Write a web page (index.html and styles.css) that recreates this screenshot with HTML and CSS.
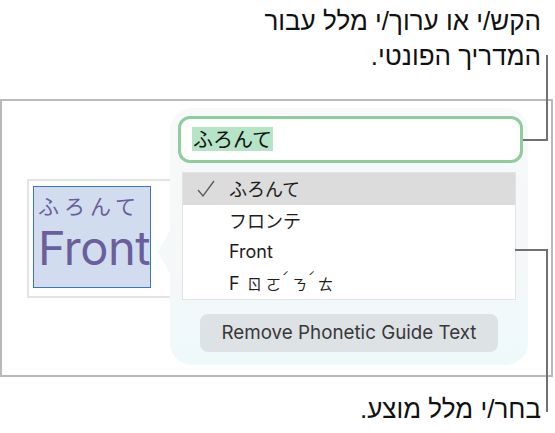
FILE: index.html
```html
<!DOCTYPE html>
<html lang="he">
<head>
<meta charset="utf-8">
<link rel="stylesheet" href="styles.css">
</head>
<body>
<div class="page">
  <div class="caption caption-top" dir="rtl">
    <div>הקש/י או ערוך/י מלל עבור</div>
    <div>המדריך הפונטי.</div>
  </div>

  <div class="frame">
    <div class="textbox">
      <div class="sel">
        <div class="ruby">ふろんて</div>
        <div class="base">Front</div>
      </div>
    </div>

    <div class="popover">
      <div class="arrow"></div>
      <div class="field"><span class="hl">ふろんて</span></div>
      <ul class="list">
        <li class="row active"><svg class="check" width="18" height="18" viewBox="0 0 18 18"><polyline points="1,10 6,16 17,1" fill="none" stroke="#5a5a5a" stroke-width="1.3"/></svg><span class="jp">ふろんて</span></li>
        <li class="row"><span class="jp">フロンテ</span></li>
        <li class="row"><span>Front</span></li>
        <li class="row bopo"><span class="g f">F</span><span class="g zy">ㄖ</span><span class="g zy">ㄛ</span><span class="g tone">ˊ</span><span class="g zy">ㄋ</span><span class="g tone">ˊ</span><span class="g zy">ㄊ</span></li>
      </ul>
      <div class="btn-wrap"><div class="btn">Remove Phonetic Guide Text</div></div>
    </div>
  </div>

  <div class="caption caption-bottom" dir="rtl">בחר/י מלל מוצע.</div>

  <div class="callout callout-top-v"></div>
  <div class="callout callout-top-h"></div>
  <div class="callout callout-bot-h"></div>
  <div class="callout callout-bot-v"></div>
</div>
</body>
</html>
```

FILE: styles.css
```css
* { box-sizing: border-box; }
html, body { margin: 0; padding: 0; background: #fff; }
.page {
  position: relative;
  width: 555px;
  height: 433px;
  overflow: hidden;
  font-family: "Liberation Sans", Arial, sans-serif;
  color: #111;
}
.caption {
  font-size: 26px;
  line-height: 35px;
  text-align: right;
  padding-right: 14px;
}
.caption-top {
  height: 99px;
  padding-top: 4px;
}
.caption-bottom {
  padding-top: 15px;
}
.frame {
  position: relative;
  width: 553px;
  height: 278px;
  border: 2px solid #b9b9b9;
  padding: 78px 0 0 25px;
}
.textbox {
  width: 160px;
  height: 119px;
  border: 2px solid #e4e4e4;
  padding: 5px 0 0 4px;
}
.sel {
  width: 118px;
  height: 102px;
  background: #d1ddee;
  border: 1.5px solid #3c74c3;
  color: #6a5e9c;
  overflow: hidden;
  padding-left: 4px;
}
.ruby {
  font-family: "Noto Sans CJK JP", sans-serif;
  font-size: 21px;
  line-height: 26px;
  letter-spacing: 5px;
  margin-top: 5px;
  white-space: nowrap;
}
.base {
  font-family: "Inter", "Liberation Sans", sans-serif;
  font-size: 47px;
  line-height: 56px;
  white-space: nowrap;
  margin-top: 2px;
  letter-spacing: -0.5px;
}
.popover {
  position: absolute;
  left: 168px;
  top: 7px;
  width: 358px;
  height: 257px;
  border-radius: 22px;
  background: linear-gradient(180deg, #f7f9fa 0%, #f4f8f9 60%, #eef9fc 100%);
  padding: 8px 5px 0 8px;
}
.arrow {
  position: absolute;
  left: -12px;
  top: 122px;
  width: 0;
  height: 0;
  border-top: 22px solid transparent;
  border-bottom: 22px solid transparent;
  border-right: 12px solid #f5f8f9;
}
.field {
  width: 345px;
  height: 47px;
  border: 3px solid #8fcd9d;
  border-radius: 12px;
  background: #fff;
  padding: 8px 0 0 11px;
  font-family: "Noto Sans CJK JP", sans-serif;
  font-size: 20px;
  line-height: 24px;
}
.hl {
  background: #b5e4c7;
  color: #111;
  display: inline-block;
  padding: 0 1px;
}
.list {
  list-style: none;
  margin: 9px 0 0 4px;
  padding: 0;
  width: 334px;
  height: 128px;
  background: #fff;
  border: 1px solid #e3e3e3;
}
.row {
  position: relative;
  height: 31.5px;
  line-height: 31px;
  padding-left: 46px;
  font-family: "Inter", "Noto Sans CJK JP", sans-serif;
  font-size: 18px;
  color: #1d1d1d;
}
.row.active { background: #dcdcdc; }
.jp { font-family: "Noto Sans CJK JP", sans-serif; font-size: 18px; }
.check {
  position: absolute;
  left: 14px;
  top: 7px;
}
.bopo {
  display: flex;
  align-items: center;
  white-space: nowrap;
}
.g { display: inline-block; }
.f { width: 18px; }
.zy {
  font-family: "Noto Sans CJK TC", sans-serif;
  font-size: 15px;
  width: 15px;
  margin-left: 4px;
}
.f + .zy { margin-left: 0; }
.tone {
  font-family: "Noto Sans CJK TC", sans-serif;
  font-size: 12px;
  width: 6px;
  margin-left: 1px;
  position: relative;
  top: -7px;
}
.btn-wrap {
  display: flex;
  justify-content: center;
  margin-top: 14px;
  padding-right: 3px;
}
.btn {
  width: 298px;
  height: 38px;
  border-radius: 8px;
  background: #dde2e5;
  color: #383838;
  font-family: "Inter", "Liberation Sans", sans-serif;
  font-size: 18.8px;
  line-height: 38px;
  text-align: center;
}
.callout {
  position: absolute;
  background: #717171;
}
.callout-top-v { left: 546px; top: 55px; width: 2px; height: 86px; }
.callout-top-h { left: 523px; top: 139px; width: 25px; height: 2px; }
.callout-bot-h { left: 515px; top: 249px; width: 33px; height: 2px; }
.callout-bot-v { left: 546px; top: 249px; width: 2px; height: 163px; }
```
